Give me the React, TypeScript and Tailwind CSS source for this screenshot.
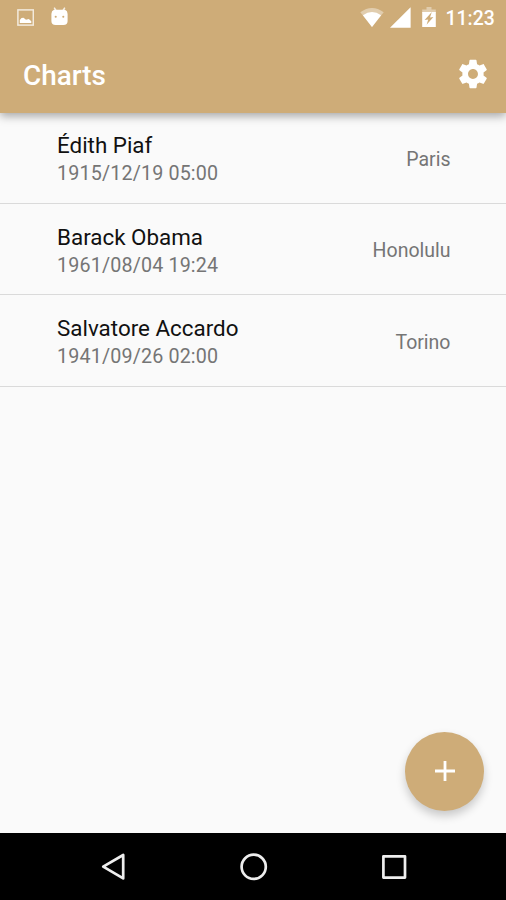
type Chart = { name: string; date: string; place: string };

const charts: Chart[] = [
  { name: "Édith Piaf", date: "1915/12/19 05:00", place: "Paris" },
  { name: "Barack Obama", date: "1961/08/04 19:24", place: "Honolulu" },
  { name: "Salvatore Accardo", date: "1941/09/26 02:00", place: "Torino" },
];

function StatusBar() {
  return (
    <div className="flex h-[34px] items-center justify-between pl-[17px] pr-[11px]">
      <div className="flex h-full items-start gap-[17px] pt-[7px]">
        {/* Picture saved */}
        <svg width="17" height="19" viewBox="0 0 17 19">
          <rect x="0.9" y="2.9" width="15.4" height="15.2" fill="none" stroke="#fff" strokeWidth="1.5" strokeOpacity="0.75" />
          <path d="M2.8 16V13L4.5 11L6.5 10.8L9 12.8L11.8 12L14.3 14.2V16Z" fill="#fff" />
        </svg>
        {/* Debug robot */}
        <svg width="17" height="19" viewBox="0 0 17 19">
          <path d="M3.2 0.6L5.2 4M13.8 0.6L11.8 4" stroke="#fff" strokeWidth="1.5" strokeOpacity="0.8" />
          <path d="M3 2.8H14Q16.6 3.8 16.6 7V14Q16.6 18 12.4 18H4.6Q0.4 18 0.4 14V7Q0.4 3.8 3 2.8Z" fill="#fff" />
          <circle cx="4.7" cy="9.7" r="1.05" fill="#ceac78" />
          <circle cx="12.3" cy="9.7" r="1.05" fill="#ceac78" />
        </svg>
      </div>
      <div className="flex h-full items-start pt-[7px]">
        <svg width="24" height="21" viewBox="0 0 24 21">
          <path d="M0.3 5.3Q12 -3.5 23.7 5.3L12 20Z" fill="#fff" fillOpacity="0.4" />
          <path d="M2.9 8.2Q12 1.8 21.1 8.2L12 20Z" fill="#fff" />
        </svg>
        <svg width="22" height="22" viewBox="0 0 22 22" className="ml-[6px]">
          <path d="M20.6 0.3V20.8H0Z" fill="#fff" />
        </svg>
        <svg width="14" height="21" viewBox="0 0 14 21" className="ml-[10px]">
          <path d="M4.5 0H9.5V2.4H13.8V6H0.2V2.4H4.5Z" fill="#fff" fillOpacity="0.4" />
          <path d="M0.2 5H13.8V20H0.2Z" fill="#fff" />
          <path d="M9.8 5L8 10.4L11.4 10L4.6 17.8L6.2 12.6L2.6 13Z" fill="#ceac78" />
        </svg>
        <span className="ml-[9.5px] mt-[1px] w-[49.5px] whitespace-nowrap text-[19.4px] font-medium leading-[22px]">11:23</span>
      </div>
    </div>
  );
}

function Toolbar() {
  return (
    <div className="flex h-[78.5px] items-center justify-between pl-[23px] pr-4">
      <h1 className="pt-[5px] text-[27.9px] font-medium leading-8">Charts</h1>
      <button aria-label="Settings" className="pt-[1px]">
        <svg width="34" height="34" viewBox="0 0 24 24" fill="#fff">
          <path d="M19.43 12.98c.04-.32.07-.64.07-.98s-.03-.66-.07-.98l2.11-1.65c.19-.15.24-.42.12-.64l-2-3.46c-.12-.22-.39-.3-.61-.22l-2.49 1c-.52-.4-1.08-.73-1.69-.98l-.38-2.65C14.46 2.18 14.25 2 14 2h-4c-.25 0-.46.18-.49.42l-.38 2.65c-.61.25-1.17.59-1.69.98l-2.49-1c-.23-.09-.49 0-.61.22l-2 3.46c-.13.22-.07.49.12.64l2.11 1.65c-.04.32-.07.65-.07.98s.03.66.07.98l-2.11 1.65c-.19.15-.24.42-.12.64l2 3.46c.12.22.39.3.61.22l2.49-1c.52.4 1.08.73 1.69.98l.38 2.65c.03.24.24.42.49.42h4c.25 0 .46-.18.49-.42l.38-2.65c.61-.25 1.17-.59 1.69-.98l2.49 1c.23.09.49 0 .61-.22l2-3.46c.12-.22.07-.49-.12-.64l-2.11-1.65zM12 15.5c-1.93 0-3.5-1.57-3.5-3.5s1.57-3.5 3.5-3.5 3.5 1.57 3.5 3.5-1.57 3.5-3.5 3.5z" />
        </svg>
      </button>
    </div>
  );
}

function ChartRow({ chart }: { chart: Chart }) {
  return (
    <li className="flex h-[91.4px] items-center justify-between border-b-[1.5px] border-[#dadada] pt-[4px] pl-[57px] pr-[55.5px]">
      <div>
        <p className="text-[22.4px] leading-[28px] text-[#111]">{chart.name}</p>
        <p className="pt-[1px] text-[19.7px] leading-[28px] tracking-[0.16px] text-[#757575]">{chart.date}</p>
      </div>
      <p className="pt-[0.5px] text-[19.5px] leading-6 text-[#757575]">{chart.place}</p>
    </li>
  );
}

function NavBar() {
  return (
    <nav className="flex h-[67px] items-center justify-between bg-black pl-[98.5px] pr-[97px]">
      <svg width="30" height="30" viewBox="0 0 30 30" fill="none" stroke="#eee" strokeWidth="2.7" strokeLinejoin="round">
        <path d="M24.2 3V26.4L4.2 14.7Z" />
      </svg>
      <svg width="30" height="30" viewBox="0 0 30 30" fill="none" stroke="#eee" strokeWidth="2.7">
        <circle cx="14.7" cy="14.8" r="12.1" />
      </svg>
      <svg width="30" height="30" viewBox="0 0 30 30" fill="none" stroke="#eee" strokeWidth="2.7" strokeLinejoin="round">
        <rect x="4.4" y="4.3" width="21.6" height="21.3" />
      </svg>
    </nav>
  );
}

export default function App() {
  return (
    <div className="relative flex h-[900px] w-[506px] flex-col overflow-hidden bg-[#fafafa] font-[Roboto,sans-serif]">
      <header className="z-10 h-[112.5px] shrink-0 bg-[#ceac78] text-white shadow-[0_3px_9px_rgba(0,0,0,0.35)]">
        <StatusBar />
        <Toolbar />
      </header>
      <ul className="flex-1">
        {charts.map((chart) => (
          <ChartRow key={chart.name} chart={chart} />
        ))}
      </ul>
      <button
        aria-label="Add chart"
        className="absolute bottom-[89.5px] right-[21.6px] flex size-[79px] items-center justify-center rounded-full bg-[#ceac78] shadow-[0_5px_10px_rgba(0,0,0,0.2)]"
      >
        <svg width="20" height="20" viewBox="0 0 20 20" stroke="#fff" strokeWidth="2.8">
          <path d="M10 0V20M0 10H20" />
        </svg>
      </button>
      <NavBar />
    </div>
  );
}
